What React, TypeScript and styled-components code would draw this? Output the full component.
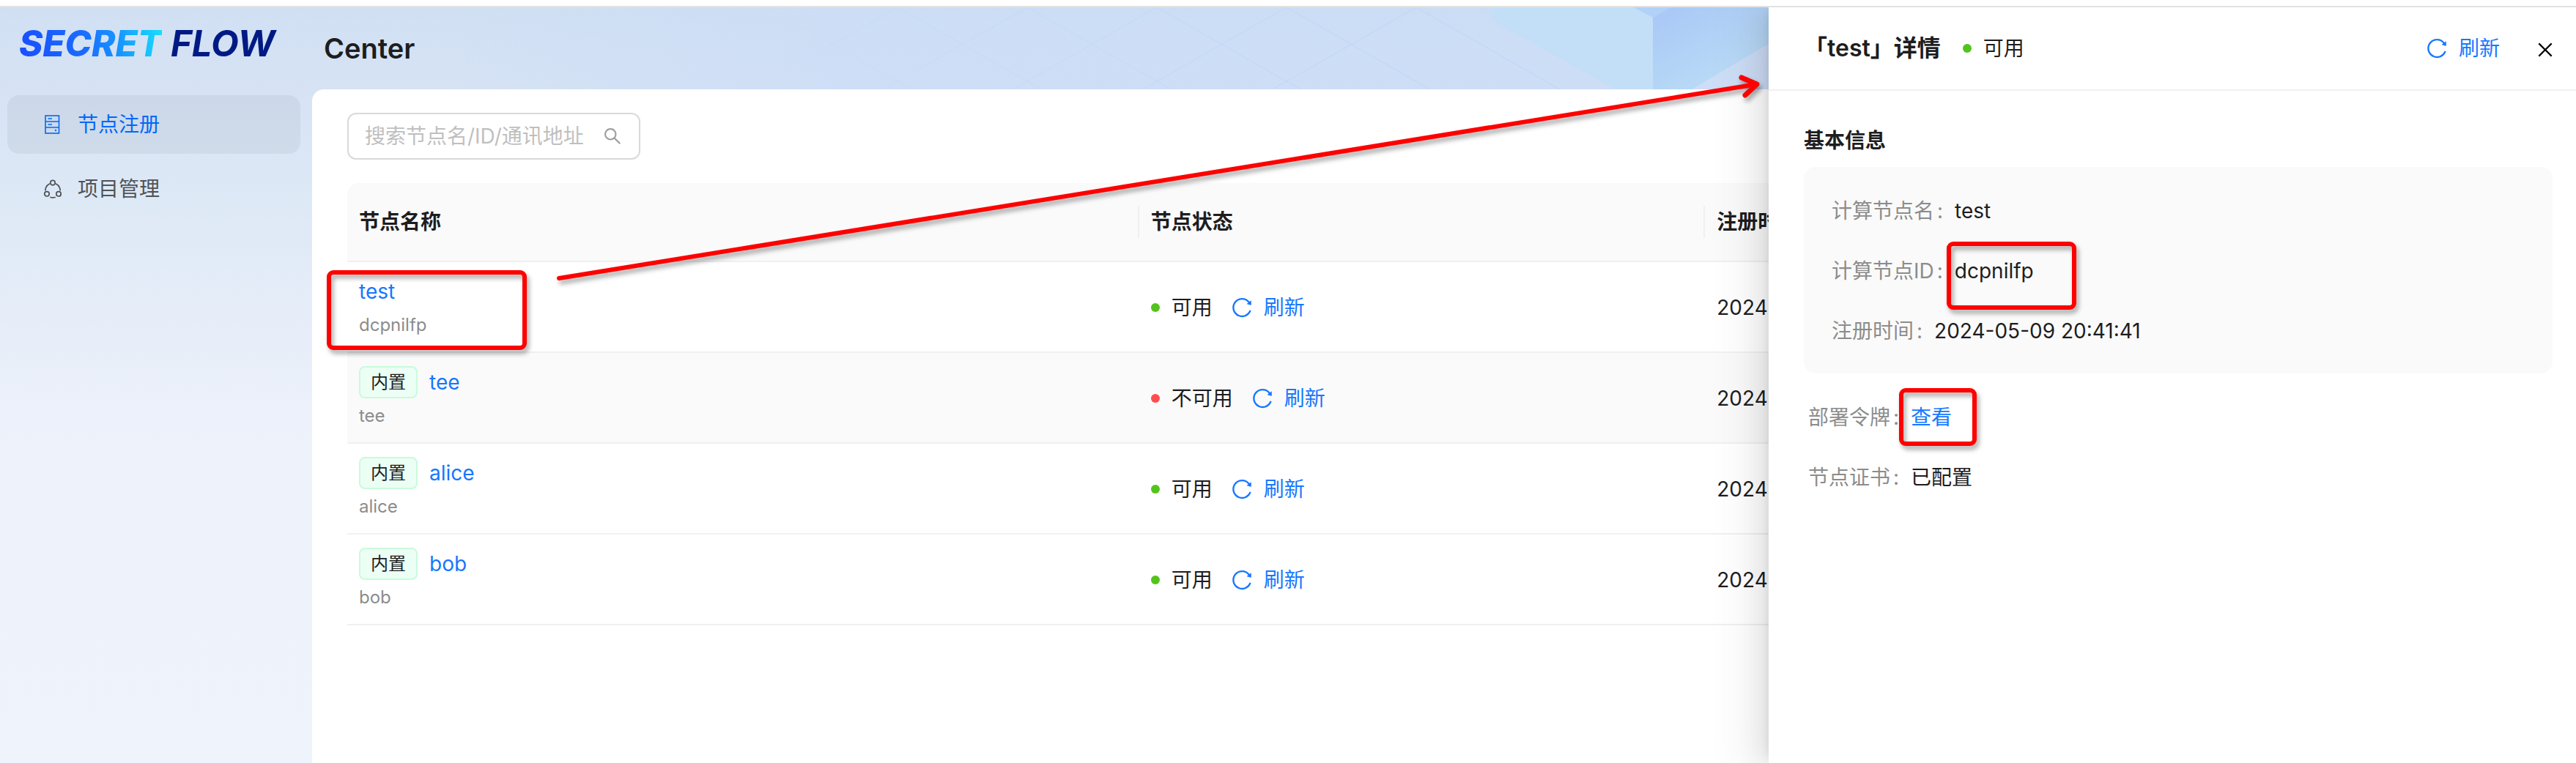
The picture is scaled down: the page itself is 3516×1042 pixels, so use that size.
import React from 'react';
import styled, { createGlobalStyle } from 'styled-components';
import { AiOutlineClose, AiOutlineReload, AiOutlineSearch } from 'react-icons/ai';

const GlobalStyle = createGlobalStyle`
  *, *::before, *::after { box-sizing: border-box; }
  body {
    margin: 0;
    color: #1d1d1f;
    background: #fff;
    font-family: Inter, "Noto Sans CJK SC", sans-serif;
    font-size: 28px;
    line-height: 44px;
  }
  button, input { font: inherit; color: inherit; }
  h1, h2, dl, dd, ul { margin: 0; padding: 0; }
  a { color: #1677ff; text-decoration: none; }
`;

const Page = styled.div`
  position: relative;
  display: flex;
  flex-direction: column;
  min-height: 100vh;
  padding-top: 8px;
  overflow: hidden;
`;

const Shell = styled.div`
  position: relative;
  flex: 1;
  display: grid;
  grid-template-columns: 426px 1fr;
  border-top: 2px solid #e2e2e2;
  background: linear-gradient(#d0e0f2 0, #d7e3f5 120px, #dfeaf6 300px, #e8eef9 460px, #eef2fb 600px, #eff3fb 100%);
`;

const Sidebar = styled.nav`
  display: flex;
  flex-direction: column;
  gap: 40px;
  padding: 24px 16px 0 10px;
`;

const Logo = styled.a`
  display: flex;
  gap: 12px;
  height: 56px;
  padding: 0 16px;
  font-size: 49px;
  font-style: italic;
  line-height: 52px;
  white-space: nowrap;
`;

const LogoSecret = styled.span`
  font-weight: 800;
  color: transparent;
  background: linear-gradient(80deg, #1a4dff 0%, #1a6bff 45%, #1793ff 68%, #17dfff 100%);
  background-clip: text;
`;

const LogoFlow = styled.span`
  font-weight: 700;
  color: #001a85;
`;

const Menu = styled.ul`
  display: flex;
  flex-direction: column;
  gap: 8px;
  list-style: none;
`;

const MenuLink = styled.a<{ $active?: boolean }>`
  display: flex;
  align-items: center;
  gap: 22px;
  height: 80px;
  padding: 0 48px;
  border-radius: 16px;
  color: ${(p) => (p.$active ? '#0068fa' : '#4e5358')};
  background: ${(p) => (p.$active ? 'rgba(0, 10, 26, 0.05)' : 'transparent')};

  svg { flex: none; }
`;

const Main = styled.main`
  display: flex;
  flex-direction: column;
  min-width: 0;
`;

const TopBar = styled.header`
  position: relative;
  display: flex;
  align-items: center;
  height: 112px;
  padding: 0 16px;
`;

const TopBarArt = styled.svg`
  position: absolute;
  top: 0;
  left: 174px;
`;

const PageTitle = styled.h1`
  position: relative;
  font-size: 38px;
  font-weight: 600;
  line-height: 48px;
`;

const Content = styled.section`
  flex: 1;
  padding: 32px 48px;
  border-top-left-radius: 16px;
  background: #fff;
`;

const SearchBox = styled.label`
  display: flex;
  align-items: center;
  gap: 16px;
  width: 400px;
  height: 64px;
  margin-bottom: 32px;
  padding: 0 22px;
  border: 2px solid #d9d9d9;
  border-radius: 12px;
  color: #9c9c9c;

  svg { flex: none; }
`;

const SearchInput = styled.input`
  flex: 1;
  min-width: 0;
  padding: 0;
  border: 0;
  outline: 0;
  background: transparent;
  &::placeholder { color: #bfbfbf; opacity: 1; }
`;

const Table = styled.table`
  width: 100%;
  table-layout: fixed;
  border-collapse: separate;
  border-spacing: 0;
`;

const HeadCell = styled.th<{ $width?: string }>`
  width: ${(p) => p.$width ?? 'auto'};
  height: 108px;
  padding: 0;
  border-bottom: 2px solid #f0f0f0;
  background: #fafafa;
  font-weight: 700;
  text-align: left;

  &:first-child { border-top-left-radius: 16px; }
  &:last-child { border-top-right-radius: 16px; }
`;

const HeadLabel = styled.div<{ $divided?: boolean }>`
  padding-left: 16px;
  border-right: ${(p) => (p.$divided ? '2px solid #f0f0f0' : '0')};
`;

const Row = styled.tr<{ $hovered?: boolean }>`
  background: ${(p) => (p.$hovered ? '#fafafa' : '#fff')};
`;

const Cell = styled.td`
  height: 124px;
  padding: 16px 16px 14px;
  border-bottom: 2px solid #f0f0f0;
`;

const Node = styled.div`
  position: relative;
`;

const NameLine = styled.div`
  display: flex;
  align-items: center;
  gap: 16px;
  height: 48px;
`;

const NodeId = styled.div`
  color: #8c8c8c;
  font-size: 24px;
  line-height: 44px;
`;

const Tag = styled.span`
  height: 44px;
  padding: 0 14px;
  border: 2px solid #c9fadd;
  border-radius: 8px;
  background: #ecfff4;
  font-size: 24px;
  line-height: 40px;
`;

const StatusLine = styled.div`
  display: flex;
  align-items: center;
  gap: 24px;
`;

const StatusText = styled.span`
  display: flex;
  align-items: center;
  gap: 16px;
`;

const Dot = styled.span<{ $ok: boolean }>`
  width: 12px;
  height: 12px;
  border-radius: 50%;
  background: ${(p) => (p.$ok ? '#52c41a' : '#ff4d4f')};
`;

const RefreshButton = styled.button`
  display: flex;
  align-items: center;
  gap: 14px;
  padding: 0;
  border: 0;
  background: none;
  color: #1677ff;
  cursor: pointer;
`;

const Drawer = styled.aside`
  position: absolute;
  top: 10px;
  right: 0;
  bottom: 0;
  width: 1102px;
  background: #fff;
  box-shadow: -12px 0 32px rgba(0, 0, 0, 0.08), -6px 0 12px -8px rgba(0, 0, 0, 0.12),
    -18px 0 56px 16px rgba(0, 0, 0, 0.05);
  clip-path: inset(0 0 0 -120px);
`;

const DrawerHeader = styled.header`
  display: flex;
  align-items: center;
  height: 114px;
  padding: 0 28px 0 48px;
  border-bottom: 2px solid #f0f0f0;
`;

const DrawerTitle = styled.h2`
  margin-right: 30px;
  font-size: 32px;
  font-weight: 600;
`;

const DrawerActions = styled.div`
  display: flex;
  align-items: center;
  gap: 48px;
  margin-left: auto;
`;

const CloseButton = styled.button`
  display: flex;
  padding: 4px 0 0;
  border: 0;
  background: none;
  color: #000;
  cursor: pointer;
`;

const DrawerBody = styled.div`
  padding: 46px 32px 32px 48px;
`;

const SectionTitle = styled.h2`
  margin-bottom: 14px;
  font-size: 28px;
  font-weight: 600;
`;

const Card = styled.dl`
  display: flex;
  flex-direction: column;
  gap: 38px;
  padding: 38px 38px 36px;
  border-radius: 16px;
  background: #fafafa;
`;

const Extras = styled.dl`
  display: flex;
  flex-direction: column;
  gap: 38px;
  padding: 38px 6px;
`;

const Field = styled.div`
  display: flex;
`;

const Term = styled.dt`
  color: #8c8c8c;
  &::after { content: ':'; margin: 0 16px 0 4px; }
`;

const Detail = styled.dd`
  position: relative;
`;

const Highlight = styled.span<{ $top: number; $left: number; $width: number; $height: number }>`
  position: absolute;
  top: ${(p) => p.$top}px;
  left: ${(p) => p.$left}px;
  width: ${(p) => p.$width}px;
  height: ${(p) => p.$height}px;
  border: 6px solid #f00;
  border-radius: 9px;
  filter: drop-shadow(3px 5px 3px rgba(0, 0, 0, 0.35));
  pointer-events: none;
`;

const Arrow = styled.svg`
  position: absolute;
  top: 90px;
  left: 750px;
  overflow: visible;
  filter: drop-shadow(3px 5px 3px rgba(0, 0, 0, 0.35));
  pointer-events: none;
`;

const NodeIcon = () => (
  <svg width="26" height="28" viewBox="0 0 26 28" fill="none" stroke="currentColor" strokeWidth="1.6" aria-hidden="true">
    <rect x="4" y="2" width="18.5" height="24" />
    <path d="M4 10h18.5M4 18h18.5M7.5 6h5.5M7.5 14h5.5" />
    <circle cx="18" cy="22" r="1.2" fill="currentColor" stroke="none" />
  </svg>
);

const ProjectIcon = () => (
  <svg width="26" height="28" viewBox="0 0 26 28" fill="none" stroke="currentColor" strokeWidth="1.7" aria-hidden="true">
    <circle cx="14" cy="5.6" r="3.2" />
    <circle cx="6" cy="20.8" r="3.2" />
    <circle cx="22" cy="20.8" r="3.2" />
    <path d="M10 6.8A11 11 0 0 0 3.8 16.5M18 6.8A11 11 0 0 1 24.2 16.5M10.3 25.2A11 11 0 0 0 17.7 25.2" />
  </svg>
);

const peaks = [271, 448, 625, 802, 979, 1156, 1333];

const Backdrop = () => (
  <TopBarArt width="1814" height="112" viewBox="0 0 1814 112" aria-hidden="true">
    <defs>
      <linearGradient id="wash">
        <stop offset="0" stopColor="#c9dbf7" stopOpacity="0" />
        <stop offset="0.3" stopColor="#c9dbf7" stopOpacity="0.6" />
        <stop offset="1" stopColor="#c9dbf7" stopOpacity="0.7" />
      </linearGradient>
      <linearGradient id="lines" gradientUnits="userSpaceOnUse" x1="300" y1="0" x2="1300" y2="0">
        <stop offset="0" stopColor="#bfd8f7" stopOpacity="0" />
        <stop offset="1" stopColor="#bfd8f7" stopOpacity="0.8" />
      </linearGradient>
      <linearGradient id="face" x1="0" y1="0" x2="0.8" y2="1">
        <stop offset="0" stopColor="#a9c6f6" />
        <stop offset="1" stopColor="#bcdff6" />
      </linearGradient>
    </defs>
    <rect width="1814" height="112" fill="url(#wash)" />
    <g stroke="url(#lines)" strokeWidth="1.5" fill="none">
      {peaks.map((x) => (
        <path key={x} d={`M${x - 196} 112L${x} 0L${x + 196} 112`} />
      ))}
    </g>
    <path d="M1437 0V18L1605 112H1656V14L1630 0Z" fill="#c3dff7" />
    <path d="M1630 0L1656 14L1680 0Z" fill="#b2d1f8" />
    <path d="M1656 14L1680 0H1814V50L1709 112H1656Z" fill="url(#face)" />
  </TopBarArt>
);

const Refresh = () => (
  <RefreshButton type="button">
    <AiOutlineReload size={32} />
    刷新
  </RefreshButton>
);

const Status = ({ ok }: { ok: boolean }) => (
  <StatusText>
    <Dot $ok={ok} />
    {ok ? '可用' : '不可用'}
  </StatusText>
);

interface NodeRecord {
  name: string;
  id: string;
  builtIn: boolean;
  ok: boolean;
  created: string;
}

const nodes: NodeRecord[] = [
  { name: 'test', id: 'dcpnilfp', builtIn: false, ok: true, created: '2024-' },
  { name: 'tee', id: 'tee', builtIn: true, ok: false, created: '2024-' },
  { name: 'alice', id: 'alice', builtIn: true, ok: true, created: '2024-' },
  { name: 'bob', id: 'bob', builtIn: true, ok: true, created: '2024-' },
];

export default function App() {
  return (
    <>
      <GlobalStyle />
      <Page>
        <Shell>
          <Sidebar>
            <Logo href="#">
              <LogoSecret>SECRET</LogoSecret>
              <LogoFlow>FLOW</LogoFlow>
            </Logo>
            <Menu>
              <li>
                <MenuLink href="#nodes" $active>
                  <NodeIcon />
                  节点注册
                </MenuLink>
              </li>
              <li>
                <MenuLink href="#projects">
                  <ProjectIcon />
                  项目管理
                </MenuLink>
              </li>
            </Menu>
          </Sidebar>
          <Main>
            <TopBar>
              <Backdrop />
              <PageTitle>Center</PageTitle>
            </TopBar>
            <Content>
              <SearchBox>
                <SearchInput type="text" placeholder="搜索节点名/ID/通讯地址" aria-label="搜索节点名/ID/通讯地址" />
                <AiOutlineSearch size={28} />
              </SearchBox>
              <Table>
                <thead>
                  <tr>
                    <HeadCell $width="36.1%">
                      <HeadLabel $divided>节点名称</HeadLabel>
                    </HeadCell>
                    <HeadCell $width="25.8%">
                      <HeadLabel $divided>节点状态</HeadLabel>
                    </HeadCell>
                    <HeadCell>
                      <HeadLabel>注册时间</HeadLabel>
                    </HeadCell>
                  </tr>
                </thead>
                <tbody>
                  {nodes.map((n) => (
                    <Row key={n.name} $hovered={n.name === 'tee'}>
                      <Cell>
                        <Node>
                          <NameLine>
                            {n.builtIn && <Tag>内置</Tag>}
                            <a href={`#${n.name}`}>{n.name}</a>
                          </NameLine>
                          <NodeId>{n.id}</NodeId>
                          {n.name === 'test' && <Highlight $top={-5} $left={-44} $width={273} $height={109} />}
                        </Node>
                      </Cell>
                      <Cell>
                        <StatusLine>
                          <Status ok={n.ok} />
                          <Refresh />
                        </StatusLine>
                      </Cell>
                      <Cell>{n.created}</Cell>
                    </Row>
                  ))}
                </tbody>
              </Table>
            </Content>
          </Main>
        </Shell>

        <Drawer aria-label="节点详情">
          <DrawerHeader>
            <DrawerTitle>「test」详情</DrawerTitle>
            <Status ok />
            <DrawerActions>
              <Refresh />
              <CloseButton type="button" aria-label="关闭">
                <AiOutlineClose size={28} />
              </CloseButton>
            </DrawerActions>
          </DrawerHeader>
          <DrawerBody>
            <SectionTitle>基本信息</SectionTitle>
            <Card>
              <Field>
                <Term>计算节点名</Term>
                <Detail>test</Detail>
              </Field>
              <Field>
                <Term>计算节点ID</Term>
                <Detail>
                  dcpnilfp
                  <Highlight $top={-18} $left={-11} $width={177} $height={93} />
                </Detail>
              </Field>
              <Field>
                <Term>注册时间</Term>
                <Detail>2024-05-09 20:41:41</Detail>
              </Field>
            </Card>
            <Extras>
              <Field>
                <Term>部署令牌</Term>
                <Detail>
                  <a href="#token">查看</a>
                  <Highlight $top={-18} $left={-16} $width={106} $height={79} />
                </Detail>
              </Field>
              <Field>
                <Term>节点证书</Term>
                <Detail>已配置</Detail>
              </Field>
            </Extras>
          </DrawerBody>
        </Drawer>

        <Arrow width="1660" height="300" viewBox="0 0 1660 300" fill="none" stroke="#f00" strokeLinecap="round" strokeLinejoin="round" aria-hidden="true">
          <path d="M13 290L1648 25" strokeWidth="6" />
          <path d="M1627 16L1648 25L1632 40" strokeWidth="7" />
        </Arrow>
      </Page>
    </>
  );
}
